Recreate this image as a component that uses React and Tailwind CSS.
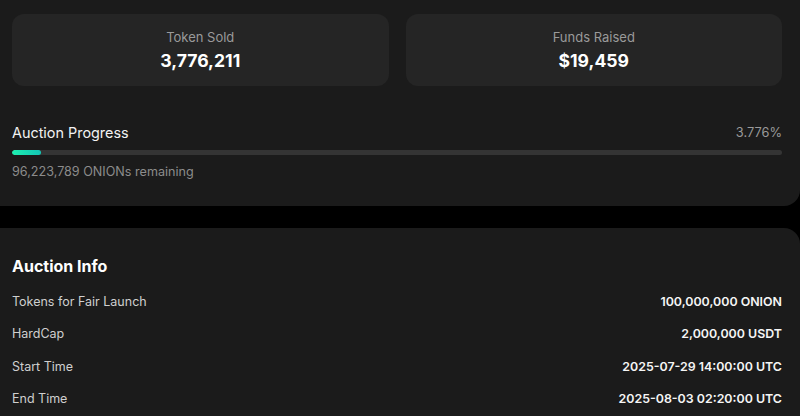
import React from 'react';

const stats = [
  { label: 'Token Sold', value: '3,776,211' },
  { label: 'Funds Raised', value: '$19,459' },
];

const info = [
  { label: 'Tokens for Fair Launch', value: '100,000,000 ONION' },
  { label: 'HardCap', value: '2,000,000 USDT' },
  { label: 'Start Time', value: '2025-07-29 14:00:00 UTC' },
  { label: 'End Time', value: '2025-08-03 02:20:00 UTC' },
];

function App() {
  const progress = 3.776;

  return (
    <div className="h-screen bg-black font-['Inter',sans-serif] overflow-hidden">
      <div className="bg-[#1b1b1b] rounded-br-2xl pl-3 pr-[18px] pt-[14px] pb-6">
        <div className="grid grid-cols-2 gap-[17px]">
          {stats.map((s) => (
            <div key={s.label} className="bg-[#252525] rounded-xl h-[72px] flex flex-col items-center justify-center">
              <span className="text-[13px] leading-5 text-[#9a9a9a]">{s.label}</span>
              <span className="mt-px text-[17.6px] leading-[26px] font-bold text-white">{s.value}</span>
            </div>
          ))}
        </div>

        <div className="mt-[37px] flex justify-between items-center">
          <span className="text-[14.4px] leading-5 text-[#f2f2f2]">Auction Progress</span>
          <span className="text-[12.8px] leading-5 text-[#9a9a9a]">{progress}%</span>
        </div>
        <div className="mt-[7px] h-[5px] rounded-full bg-[#343434] overflow-hidden">
          <div
            className="h-full rounded-full bg-gradient-to-r from-[#1ef0b0] to-[#14c4b4]"
            style={{ width: `${progress}%` }}
          />
        </div>
        <div className="mt-[7px] text-[12.6px] leading-5 text-[#8c8c8c]">96,223,789 ONIONs remaining</div>
      </div>

      <div className="mt-[22px] bg-[#1b1b1b] rounded-tr-2xl pl-3 pr-[18px] pt-[26px] pb-6">
        <h2 className="text-[16px] leading-6 font-bold text-white">Auction Info</h2>
        <div className="mt-2">
          {info.map((row) => (
            <div key={row.label} className="h-[32.5px] flex justify-between items-center">
              <span className="text-[12.5px] text-[#cfcfcf]">{row.label}</span>
              <span className="text-[12.4px] font-semibold text-[#f5f5f5]">{row.value}</span>
            </div>
          ))}
        </div>
      </div>
    </div>
  );
}

export default App;
